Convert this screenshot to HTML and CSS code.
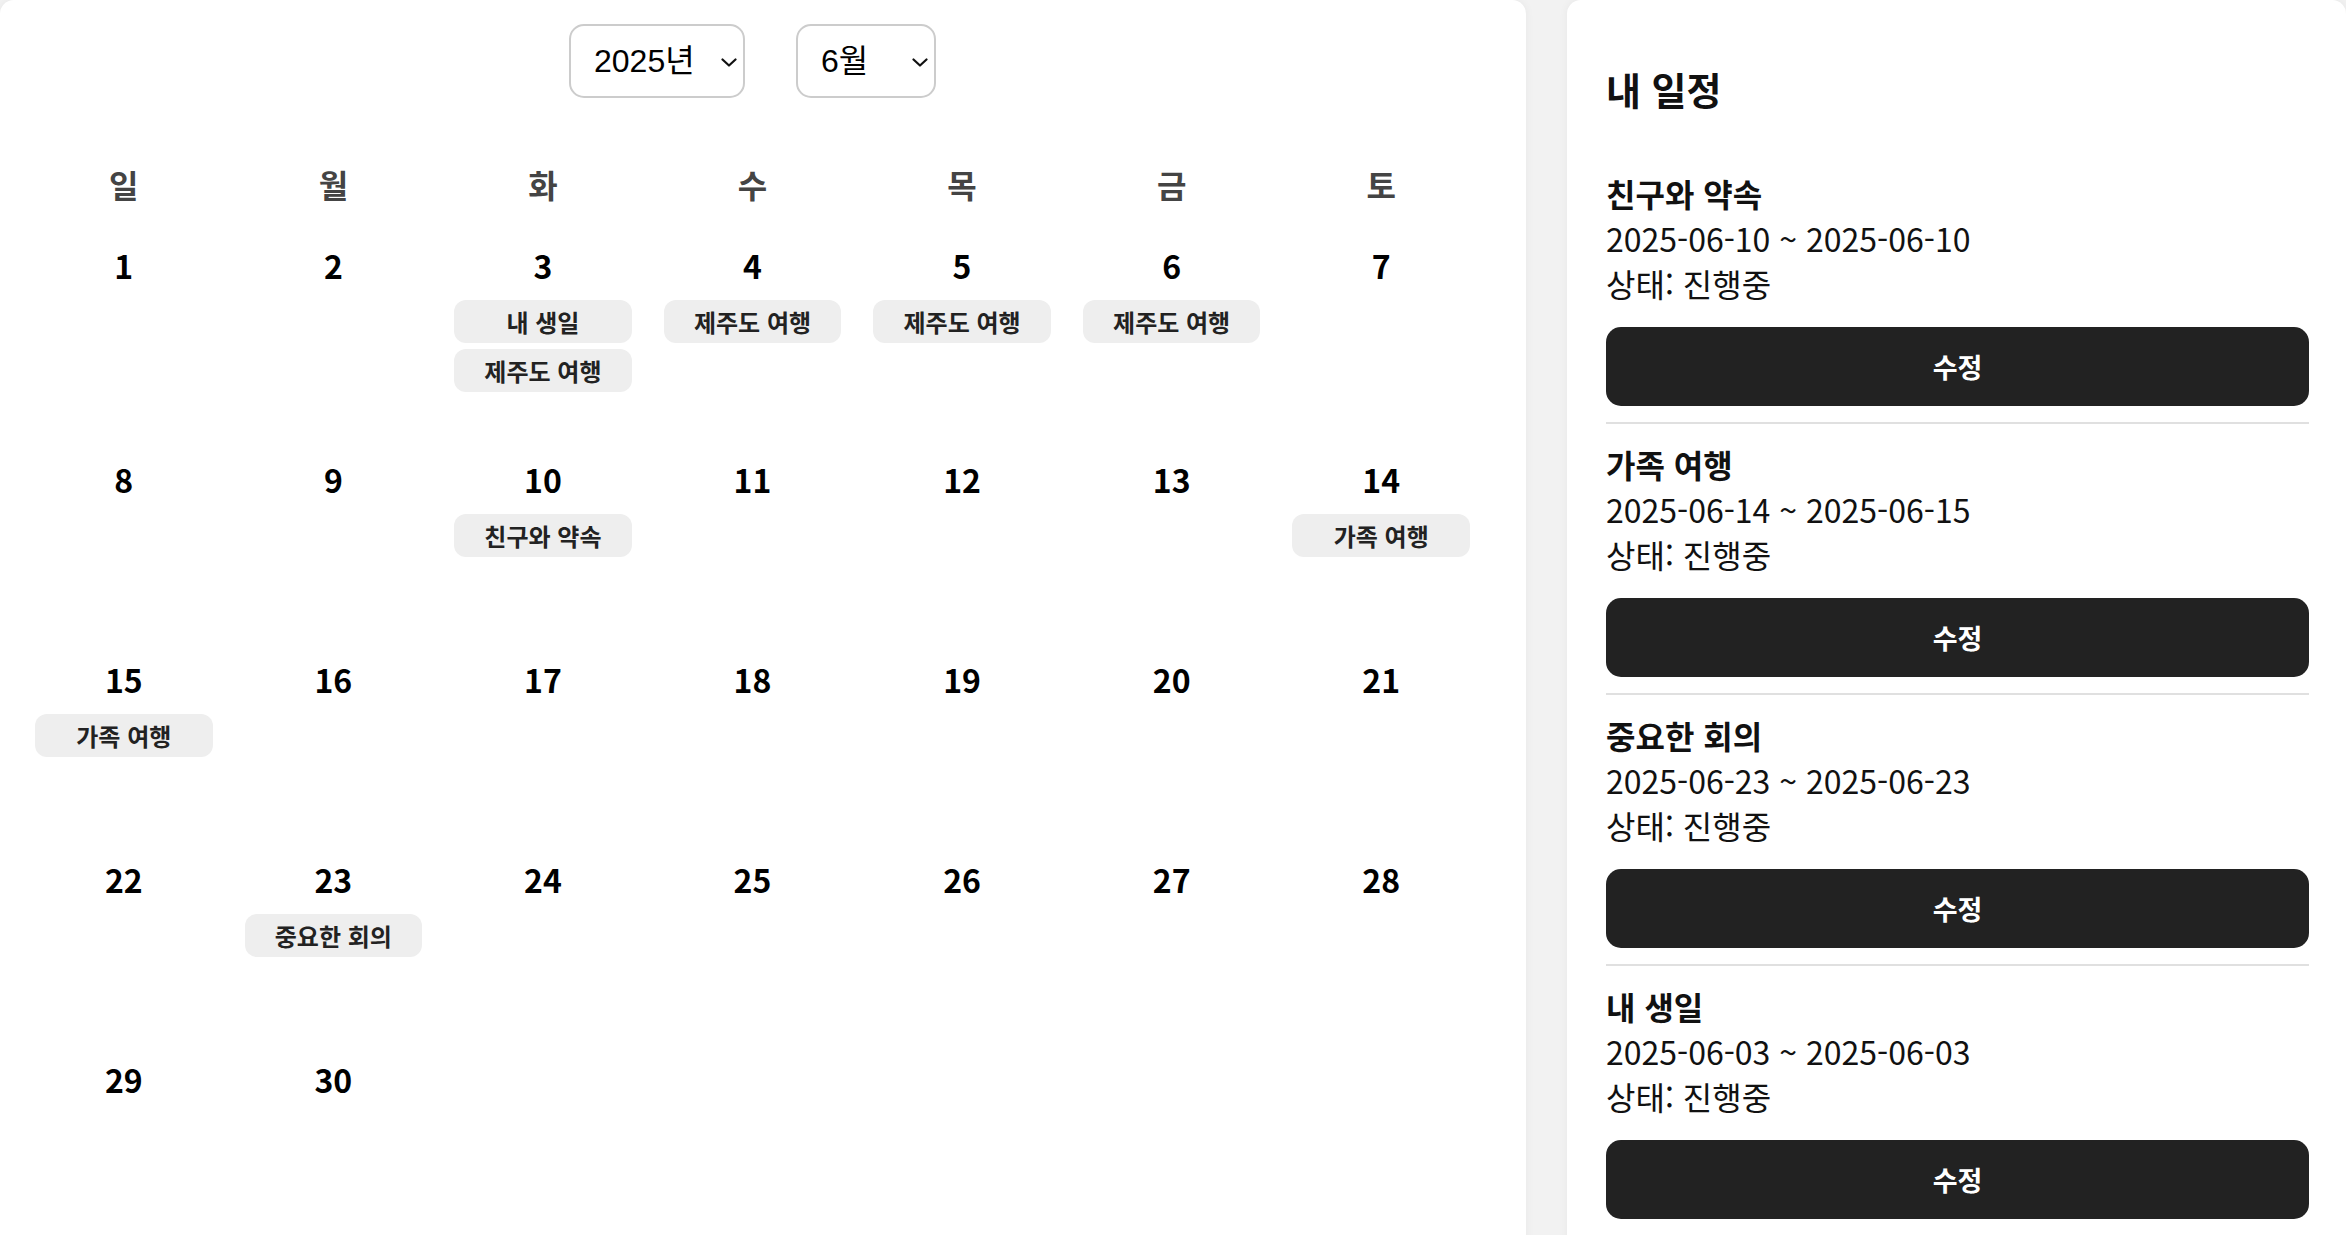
FILE: index.html
```html
<!DOCTYPE html>
<html lang="ko">
<head>
<meta charset="utf-8">
<title>내 캘린더</title>
<link rel="stylesheet" href="styles.css">
</head>
<body>
<div class="layout">
  <main class="calendar-panel">
    <div class="controls">
      <div class="select-wrap year">
        <select class="select" aria-label="연도">
          <option>2024년</option>
          <option selected>2025년</option>
          <option>2026년</option>
        </select>
        <svg class="chevron" width="16" height="9" viewBox="0 0 16 9" aria-hidden="true"><path d="M1.5 1.5 L8 7.5 L14.5 1.5"/></svg>
      </div>
      <div class="select-wrap month">
        <select class="select" aria-label="월">
          <option>5월</option>
          <option selected>6월</option>
          <option>7월</option>
        </select>
        <svg class="chevron" width="16" height="9" viewBox="0 0 16 9" aria-hidden="true"><path d="M1.5 1.5 L8 7.5 L14.5 1.5"/></svg>
      </div>
    </div>

    <div class="calendar">
      <div class="weekday">일</div>
      <div class="weekday">월</div>
      <div class="weekday">화</div>
      <div class="weekday">수</div>
      <div class="weekday">목</div>
      <div class="weekday">금</div>
      <div class="weekday">토</div>

      <div class="cell"><div class="day">1</div></div>
      <div class="cell"><div class="day">2</div></div>
      <div class="cell"><div class="day">3</div><div class="tags"><span class="tag">내 생일</span><span class="tag">제주도 여행</span></div></div>
      <div class="cell"><div class="day">4</div><div class="tags"><span class="tag">제주도 여행</span></div></div>
      <div class="cell"><div class="day">5</div><div class="tags"><span class="tag">제주도 여행</span></div></div>
      <div class="cell"><div class="day">6</div><div class="tags"><span class="tag">제주도 여행</span></div></div>
      <div class="cell"><div class="day">7</div></div>

      <div class="cell"><div class="day">8</div></div>
      <div class="cell"><div class="day">9</div></div>
      <div class="cell"><div class="day">10</div><div class="tags"><span class="tag">친구와 약속</span></div></div>
      <div class="cell"><div class="day">11</div></div>
      <div class="cell"><div class="day">12</div></div>
      <div class="cell"><div class="day">13</div></div>
      <div class="cell"><div class="day">14</div><div class="tags"><span class="tag">가족 여행</span></div></div>

      <div class="cell"><div class="day">15</div><div class="tags"><span class="tag">가족 여행</span></div></div>
      <div class="cell"><div class="day">16</div></div>
      <div class="cell"><div class="day">17</div></div>
      <div class="cell"><div class="day">18</div></div>
      <div class="cell"><div class="day">19</div></div>
      <div class="cell"><div class="day">20</div></div>
      <div class="cell"><div class="day">21</div></div>

      <div class="cell"><div class="day">22</div></div>
      <div class="cell"><div class="day">23</div><div class="tags"><span class="tag">중요한 회의</span></div></div>
      <div class="cell"><div class="day">24</div></div>
      <div class="cell"><div class="day">25</div></div>
      <div class="cell"><div class="day">26</div></div>
      <div class="cell"><div class="day">27</div></div>
      <div class="cell"><div class="day">28</div></div>

      <div class="cell"><div class="day">29</div></div>
      <div class="cell"><div class="day">30</div></div>
      <div class="cell"></div>
      <div class="cell"></div>
      <div class="cell"></div>
      <div class="cell"></div>
      <div class="cell"></div>
    </div>
  </main>

  <aside class="schedule-panel">
    <h2 class="schedule-heading">내 일정</h2>
    <ul class="schedule-list">
      <li class="schedule-item">
        <div class="item-title">친구와 약속</div>
        <div class="item-line">2025-06-10 ~ 2025-06-10</div>
        <div class="item-line">상태: 진행중</div>
        <button class="edit-btn" type="button">수정</button>
      </li>
      <li class="schedule-item">
        <div class="item-title">가족 여행</div>
        <div class="item-line">2025-06-14 ~ 2025-06-15</div>
        <div class="item-line">상태: 진행중</div>
        <button class="edit-btn" type="button">수정</button>
      </li>
      <li class="schedule-item">
        <div class="item-title">중요한 회의</div>
        <div class="item-line">2025-06-23 ~ 2025-06-23</div>
        <div class="item-line">상태: 진행중</div>
        <button class="edit-btn" type="button">수정</button>
      </li>
      <li class="schedule-item">
        <div class="item-title">내 생일</div>
        <div class="item-line">2025-06-03 ~ 2025-06-03</div>
        <div class="item-line">상태: 진행중</div>
        <button class="edit-btn" type="button">수정</button>
      </li>
    </ul>
  </aside>
</div>
</body>
</html>
```

FILE: styles.css
```css
* {
  box-sizing: border-box;
}

html,
body {
  margin: 0;
  padding: 0;
}

body {
  background: #f2f2f2;
  font-family: "Noto Sans CJK KR", "Noto Sans", sans-serif;
  color: #111;
  overflow: hidden;
}

.layout {
  display: flex;
  gap: 41px;
  min-height: 100vh;
}

/* ---------- calendar ---------- */
.calendar-panel {
  width: 1526px;
  flex: none;
  background: #fff;
  border-radius: 14px;
  box-shadow: 0 0 10px rgba(0, 0, 0, 0.05);
  padding: 24px 0 40px 19px;
}

.controls {
  width: 1467px;
  display: flex;
  justify-content: center;
  gap: 51px;
}

.select-wrap {
  position: relative;
  height: 74px;
}

.select-wrap.year {
  width: 176px;
}

.select-wrap.month {
  width: 140px;
}

.select {
  appearance: none;
  -webkit-appearance: none;
  display: block;
  width: 100%;
  height: 100%;
  margin: 0;
  padding: 0 0 0 23px;
  border: 2px solid #cccccc;
  border-radius: 15px;
  background: #fff;
  color: #000;
  font-family: "Liberation Sans", "Noto Sans CJK KR", sans-serif;
  font-size: 32px;
}

.chevron {
  position: absolute;
  right: 8px;
  top: 34px;
  fill: none;
  stroke: #111;
  stroke-width: 2.2;
  stroke-linecap: round;
  stroke-linejoin: round;
  pointer-events: none;
}

.calendar {
  width: 1467px;
  margin-top: 64px;
  display: grid;
  grid-template-columns: repeat(7, 1fr);
}

.weekday {
  text-align: center;
  font-size: 32px;
  font-weight: 700;
  line-height: 44px;
  color: #444;
  padding-bottom: 2px;
}

.cell {
  min-height: 200px;
  padding: 35px 16px 30px;
  display: flex;
  flex-direction: column;
}

.day {
  text-align: center;
  font-size: 32px;
  font-weight: 700;
  line-height: 44px;
  color: #000;
}

.tags {
  margin-top: 13px;
  display: flex;
  flex-direction: column;
  gap: 6px;
}

.tag {
  display: block;
  height: 43px;
  line-height: 43px;
  text-align: center;
  background: #eeeeee;
  border-radius: 12px;
  font-size: 24px;
  font-weight: 700;
  color: #222;
  white-space: nowrap;
}

/* ---------- schedule ---------- */
.schedule-panel {
  flex: 1;
  background: #fff;
  border-radius: 14px;
  box-shadow: 0 0 10px rgba(0, 0, 0, 0.05);
  padding: 0 37px 0 39px;
}

.schedule-heading {
  margin: 66px 0 41px;
  font-size: 38px;
  line-height: 1.2;
  font-weight: 700;
  color: #111;
}

.schedule-list {
  list-style: none;
  margin: 0;
  padding: 0;
}

.schedule-item {
  padding: 18px 0 16px;
  border-bottom: 2px solid #e0e0e0;
}

.item-title {
  font-size: 32px;
  line-height: 45px;
  font-weight: 700;
  color: #111;
}

.item-line {
  font-size: 32px;
  line-height: 45px;
  color: #111;
}

.edit-btn {
  display: block;
  width: 100%;
  height: 79px;
  margin-top: 21px;
  border: none;
  border-radius: 15px;
  background: #222;
  color: #fff;
  font-family: "Noto Sans CJK KR", "Noto Sans", sans-serif;
  font-size: 27px;
  font-weight: 700;
  cursor: pointer;
}
```
